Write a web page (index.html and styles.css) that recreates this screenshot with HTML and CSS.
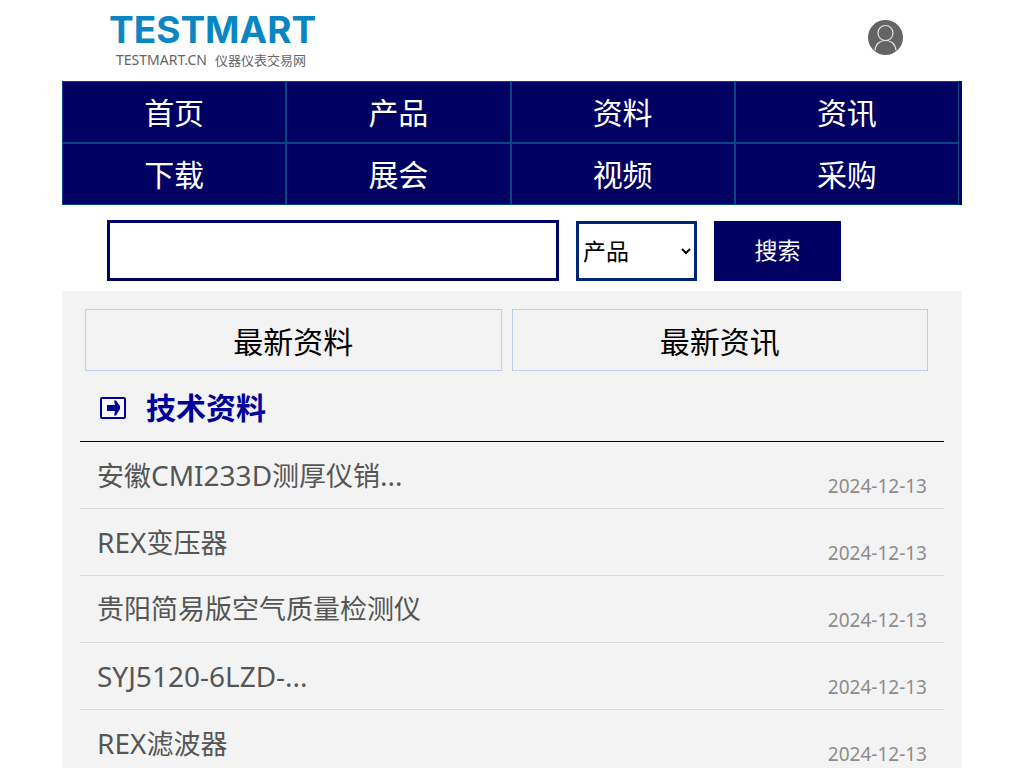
FILE: index.html
```html
<!DOCTYPE html>
<html lang="zh-CN">
<head>
<meta charset="utf-8">
<meta name="viewport" content="width=device-width, initial-scale=1">
<title>TESTMART 仪器仪表交易网</title>
<link rel="stylesheet" href="styles.css">
</head>
<body>
<div class="page">
  <header class="header">
    <a class="logo" href="#">
      <span class="logo-name">TESTMART</span>
      <span class="logo-tag"><span class="logo-domain">TESTMART.CN</span><span>仪器仪表交易网</span></span>
    </a>
    <a class="account" href="#" aria-label="用户中心">
      <svg width="35" height="35" viewBox="0 0 35 35" fill="none">
        <circle cx="17.5" cy="17.5" r="17.5" fill="#646464"/>
        <g stroke="#e4e4e4" stroke-width="1.2">
          <circle cx="17.5" cy="13" r="7.5"/>
          <path d="M7 30.500C7.500 24 12 20.500 17.500 20.500S27.500 24 28 30.500"/>
        </g>
      </svg>
    </a>
  </header>
  <nav class="nav">
    <a href="#">首页</a><a href="#">产品</a><a href="#">资料</a><a href="#">资讯</a>
    <a href="#">下载</a><a href="#">展会</a><a href="#">视频</a><a href="#">采购</a>
  </nav>
  <form class="search">
    <input class="search-input" type="text" aria-label="关键词">
    <select class="search-type" aria-label="类别"><option>产品</option><option>资料</option><option>资讯</option></select>
    <button class="search-button" type="button">搜索</button>
  </form>
  <main class="main">
    <div class="tabs"><a href="#">最新资料</a><a href="#">最新资讯</a></div>
    <section class="docs">
      <h2 class="docs-title">
        <svg width="26" height="22" viewBox="0 0 26 22">
          <rect x="1" y="1" width="24" height="20" rx="1" fill="#f8f8ff" stroke="#00009a" stroke-width="2"/>
          <path d="M7 8H15L14 3.500H16L20 9V12L16 18.500H14L15 14H7Z" fill="#00009a"/>
        </svg>
        <span>技术资料</span>
      </h2>
      <ul class="list">
        <li><a href="#">安徽<span class="model">CMI233D</span>测厚仪销<span class="model">...</span></a><time>2024-12-13</time></li>
        <li><a href="#"><span class="model">REX</span>变压器</a><time>2024-12-13</time></li>
        <li><a href="#">贵阳简易版空气质量检测仪</a><time>2024-12-13</time></li>
        <li><a href="#"><span class="model">SYJ5120-6LZD-...</span></a><time>2024-12-13</time></li>
        <li><a href="#"><span class="model">REX</span>滤波器</a><time>2024-12-13</time></li>
      </ul>
    </section>
  </main>
</div>
</body>
</html>
```
FILE: styles.css
```css
* { box-sizing: border-box; }
body {
  margin: 0;
  background: #fff;
  font-family: "Noto Sans", "Noto Sans CJK SC", sans-serif;
}
a { color: inherit; text-decoration: none; }
.page { max-width: 900px; margin: 0 auto; }

.header {
  display: flex;
  justify-content: space-between;
  align-items: flex-start;
  padding: 12px 59px 11px 47px;
}
.logo { display: flex; flex-direction: column; }
.logo-name {
  font: 700 37px/36px Inter, sans-serif;
  color: #0a86c3;
}
.logo-tag {
  display: flex;
  gap: 8px;
  padding: 2px 0 0 7px;
  font-size: 13px;
  line-height: 20px;
  color: #646464;
}
.logo-domain { font-size: 14px; }
.account { padding-top: 8px; }
.account svg { display: block; }

.nav {
  display: grid;
  grid-template-columns: repeat(4, 1fr);
  padding-right: 3px;
  background: #000062;
}
.nav a {
  height: 62px;
  border: 1px solid #084585;
  color: #fff;
  font-size: 30px;
  line-height: 62px;
  text-align: center;
}

.search {
  display: flex;
  align-items: flex-end;
  gap: 17px;
  padding: 15px 45px 10px;
}
.search-input {
  flex: 0 1 452px;
  min-width: 0;
  height: 61px;
  border: 3px solid #000062;
  background: #fff;
  font: inherit;
  font-size: 23px;
}
.search-type {
  width: 121px;
  height: 60px;
  border: 3px solid #002573;
  border-radius: 0;
  background: #fff;
  color: #000;
  font: inherit;
  font-size: 23px;
}
.search-button {
  width: 127px;
  height: 60px;
  padding: 0 0 4px;
  border: 0;
  background: #000062;
  color: #fff;
  font: inherit;
  font-size: 23px;
}

.main { padding: 18px 18px 0; background: #f3f3f3; }
.tabs {
  display: grid;
  grid-template-columns: 1fr 1fr;
  gap: 10px;
  padding: 0 16px 0 5px;
}
.tabs a {
  height: 62px;
  border: 1px solid #bccfeb;
  color: #000;
  font-size: 30px;
  line-height: 64px;
  text-align: center;
}
.docs-title {
  display: flex;
  align-items: center;
  gap: 20px;
  height: 71px;
  margin: 0;
  padding: 4px 20px 0;
  border-bottom: 1px solid #000052;
  color: #00009a;
  font-size: 30px;
  line-height: 70px;
}
.list { margin: 0; padding: 0; list-style: none; }
.list li {
  display: flex;
  justify-content: space-between;
  height: 67px;
  padding: 0 17px;
  border-bottom: 1px solid #dadada;
}
.list a { color: #555; font-size: 27px; line-height: 66px; }
.model { font-size: 28px; }
.list time { padding-top: 20px; color: #8c8c8c; font-size: 19px; line-height: 48px; }
```
